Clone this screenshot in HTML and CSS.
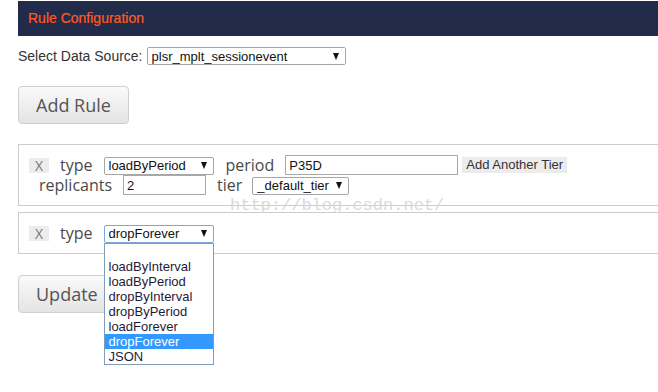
FILE: index.html
```html
<!DOCTYPE html>
<html lang="en">
<head>
  <meta charset="UTF-8">
  <title>Rule Configuration</title>
  <link rel="stylesheet" href="styles.css">
</head>
<body>
  <div class="header">Rule Configuration</div>

  <div class="source">
    <label for="ds">Select Data Source:</label>
    <span class="pick wide">
      <select id="ds"><option>plsr_mplt_sessionevent</option></select>
    </span>
  </div>

  <button class="big">Add Rule</button>

  <div class="rule">
    <div class="line">
      <button class="remove">X</button>
      <span class="lbl">type</span>
      <span class="pick type">
        <select><option>loadByPeriod</option></select>
      </span>
      <span class="lbl">period</span>
      <input class="period" type="text" value="P35D">
      <button class="tier-btn">Add Another Tier</button>
    </div>
    <div class="line second">
      <span class="lbl first">replicants</span>
      <input class="reps" type="text" value="2">
      <span class="lbl">tier</span>
      <span class="pick tier">
        <select><option>_default_tier</option></select>
      </span>
    </div>
  </div>

  <div class="rule">
    <div class="line">
      <button class="remove">X</button>
      <span class="lbl">type</span>
      <span class="pick type open">
        <select><option>dropForever</option></select>
        <ul class="options">
          <li>&nbsp;</li>
          <li>loadByInterval</li>
          <li>loadByPeriod</li>
          <li>dropByInterval</li>
          <li>dropByPeriod</li>
          <li>loadForever</li>
          <li class="active">dropForever</li>
          <li>JSON</li>
        </ul>
      </span>
    </div>
  </div>

  <button class="big">Update</button>

  <div class="watermark">http://blog.csdn.net/</div>
</body>
</html>
```

FILE: styles.css
```css
* {
  box-sizing: border-box;
}
html {
  height: 100%;
}
body {
  margin: 0;
  padding-left: 18px;
  min-height: 100%;
  font-family: "Liberation Sans", Arial, sans-serif;
  color: #333;
}
.header {
  margin-top: 1px;
  height: 35px;
  line-height: 35px;
  padding-left: 10px;
  background-color: #232b4b;
  color: #ff5a1f;
  font-size: 14px;
  -webkit-text-stroke: 0.2px #ff5a1f;
}
.source {
  display: flex;
  align-items: center;
  margin-top: 11px;
  height: 18px;
  font-size: 14px;
}
.source label {
  margin-right: 4px;
}

/* selects with the old-style arrow */
.pick {
  position: relative;
  display: inline-block;
  height: 18px;
}
.pick select {
  appearance: none;
  -webkit-appearance: none;
  width: 100%;
  height: 18px;
  margin: 0;
  padding: 0 0 0 4px;
  border: 1px solid #a6a6a6;
  border-radius: 2px;
  background: #fff;
  font-family: "Liberation Sans", Arial, sans-serif;
  font-size: 13px;
  color: #111;
}
.pick::after {
  content: "";
  position: absolute;
  right: 7px;
  top: 6px;
  border-left: 3.5px solid transparent;
  border-right: 3.5px solid transparent;
  border-top: 7px solid #111;
}
.pick.wide {
  width: 199px;
}
.pick.type {
  width: 110px;
}
.pick.tier {
  width: 97px;
}
.pick.open select {
  border-color: #7ea6d9;
}
.options {
  position: absolute;
  left: 0;
  top: 19px;
  width: 110px;
  margin: 0;
  padding: 0;
  list-style: none;
  background: #fff;
  border: 1px solid #7f9db9;
  font-size: 13px;
  color: #1f1a3a;
  z-index: 2;
}
.options li {
  height: 15px;
  line-height: 15px;
  padding-left: 4px;
}
.options li.active {
  background-color: #3399ff;
  color: #fff;
}

.big {
  display: block;
  margin-top: 21px;
  height: 38px;
  padding: 0 17px;
  border: 1px solid #cfcfcf;
  border-radius: 4px;
  background: linear-gradient(#fafafa, #e4e4e4);
  font-family: "Open Sans", sans-serif;
  font-size: 18px;
  color: #555;
}
.rule {
  margin-top: 20px;
  padding: 10px 0 10px 10px;
  border: 1px solid #cccccc;
  border-right: none;
}
.rule + .rule {
  margin-top: 6px;
}
.line {
  display: flex;
  align-items: center;
  height: 20px;
}
.lbl {
  margin-left: 11px;
  margin-right: 11px;
  font-family: "Open Sans", sans-serif;
  font-size: 16px;
  color: #4a4a4a;
}
.lbl.first {
  margin-left: 10px;
}
.remove {
  width: 20px;
  height: 15px;
  padding: 0;
  border: none;
  background-color: #ececec;
  font-family: "Open Sans", sans-serif;
  font-size: 14px;
  line-height: 15px;
  color: #777;
}
.pick + .lbl {
  margin-left: 12px;
}
input {
  height: 20px;
  margin: 0;
  padding: 0 3px;
  border: 1px solid #a9a9a9;
  font-family: "Liberation Sans", Arial, sans-serif;
  font-size: 13px;
  color: #111;
}
.period {
  width: 173px;
}
.reps {
  width: 83px;
}
.reps + .lbl {
  margin-left: 11px;
  margin-right: 10px;
}
.tier-btn {
  height: 16px;
  margin-left: 4px;
  padding: 0 4px;
  border: none;
  background-color: #ececec;
  font-family: "Liberation Sans", Arial, sans-serif;
  font-size: 13px;
  line-height: 16px;
  color: #333;
}
.watermark {
  position: absolute;
  left: 230px;
  top: 196px;
  font-family: "Liberation Mono", monospace;
  font-size: 17px;
  color: #dadada;
  pointer-events: none;
}
```
